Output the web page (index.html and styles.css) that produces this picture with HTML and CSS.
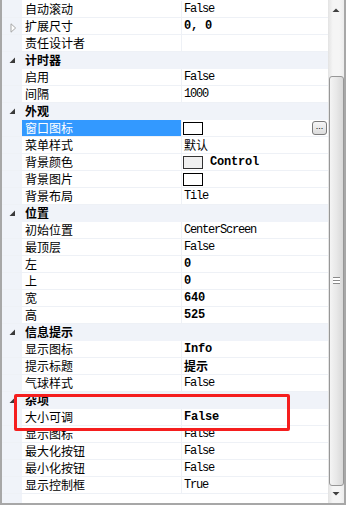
FILE: index.html
```html
<!DOCTYPE html>
<html>
<head>
    <title>属性</title>
    <link rel="stylesheet" href="styles.css">
</head>
<body>
<div class="frame">
    <div class="grid">
        <div class="row"><span class="gutter"></span><span class="name">自动滚动</span><span class="val">False</span></div>
        <div class="row"><span class="gutter"><svg class="plus" width="7" height="10" viewBox="0 0 7 10"><polygon points="1,0.8 5.6,5 1,9.2" fill="#fff" stroke="#a6a6a6"/></svg></span><span class="name">扩展尺寸</span><span class="val bold">0, 0</span></div>
        <div class="row"><span class="gutter"></span><span class="name">责任设计者</span><span class="val"></span></div>

        <div class="row cat"><span class="gutter"><svg class="minus" width="7" height="7" viewBox="0 0 7 7"><polygon points="6,0.5 6,6 0.5,6" fill="#3a3a3a"/></svg></span><span class="name">计时器</span></div>
        <div class="row"><span class="gutter"></span><span class="name">启用</span><span class="val">False</span></div>
        <div class="row"><span class="gutter"></span><span class="name">间隔</span><span class="val">1000</span></div>

        <div class="row cat"><span class="gutter"><svg class="minus" width="7" height="7" viewBox="0 0 7 7"><polygon points="6,0.5 6,6 0.5,6" fill="#3a3a3a"/></svg></span><span class="name">外观</span></div>
        <div class="row"><span class="gutter"></span><span class="name sel">窗口图标</span><span class="val"><span class="swatch"></span><span class="dots">...</span></span></div>
        <div class="row"><span class="gutter"></span><span class="name">菜单样式</span><span class="val cjk">默认</span></div>
        <div class="row"><span class="gutter"></span><span class="name">背景颜色</span><span class="val bold"><span class="swatch grey"></span>Control</span></div>
        <div class="row"><span class="gutter"></span><span class="name">背景图片</span><span class="val"><span class="swatch"></span></span></div>
        <div class="row"><span class="gutter"></span><span class="name">背景布局</span><span class="val">Tile</span></div>

        <div class="row cat"><span class="gutter"><svg class="minus" width="7" height="7" viewBox="0 0 7 7"><polygon points="6,0.5 6,6 0.5,6" fill="#3a3a3a"/></svg></span><span class="name">位置</span></div>
        <div class="row"><span class="gutter"></span><span class="name">初始位置</span><span class="val">CenterScreen</span></div>
        <div class="row"><span class="gutter"></span><span class="name">最顶层</span><span class="val">False</span></div>
        <div class="row"><span class="gutter"></span><span class="name">左</span><span class="val bold">0</span></div>
        <div class="row"><span class="gutter"></span><span class="name">上</span><span class="val bold">0</span></div>
        <div class="row"><span class="gutter"></span><span class="name">宽</span><span class="val bold">640</span></div>
        <div class="row"><span class="gutter"></span><span class="name">高</span><span class="val bold">525</span></div>

        <div class="row cat"><span class="gutter"><svg class="minus" width="7" height="7" viewBox="0 0 7 7"><polygon points="6,0.5 6,6 0.5,6" fill="#3a3a3a"/></svg></span><span class="name">信息提示</span></div>
        <div class="row"><span class="gutter"></span><span class="name">显示图标</span><span class="val bold">Info</span></div>
        <div class="row"><span class="gutter"></span><span class="name">提示标题</span><span class="val cjk bold">提示</span></div>
        <div class="row"><span class="gutter"></span><span class="name">气球样式</span><span class="val">False</span></div>

        <div class="row cat"><span class="gutter"><svg class="minus" width="7" height="7" viewBox="0 0 7 7"><polygon points="6,0.5 6,6 0.5,6" fill="#3a3a3a"/></svg></span><span class="name">杂项</span></div>
        <div class="row"><span class="gutter"></span><span class="name">大小可调</span><span class="val bold">False</span></div>
        <div class="row"><span class="gutter"></span><span class="name">显示图标</span><span class="val">False</span></div>
        <div class="row"><span class="gutter"></span><span class="name">最大化按钮</span><span class="val">False</span></div>
        <div class="row"><span class="gutter"></span><span class="name">最小化按钮</span><span class="val">False</span></div>
        <div class="row"><span class="gutter"></span><span class="name">显示控制框</span><span class="val">True</span></div>
    </div>

    <div class="scroll">
        <svg class="arrow" width="16" height="17" viewBox="0 0 16 17"><polygon points="4.5,12 8,8.5 11.5,12" fill="#404040"/></svg>
        <div class="thumb"><span class="grip"></span></div>
        <svg class="arrow" width="16" height="17" viewBox="0 0 16 17"><polygon points="4.5,6 8,9.5 11.5,6" fill="#404040"/></svg>
    </div>

    <div class="mark"></div>
</div>
</body>
</html>
```

FILE: styles.css
```css
body {
    margin: 0;
    background-color: #ffffff;
    font-family: "Noto Sans CJK SC", "Liberation Sans", sans-serif;
    font-size: 12px;
}

.frame {
    position: relative;
    display: flex;
    width: 342px;
    height: 503px;
    border-left: 2px solid #a7a7a7;
    border-right: 2px solid #a7a7a7;
    border-bottom: 2px solid #a7a7a7;
}

.grid {
    width: 326px;
    padding-top: 1px;
    background-color: #ffffff;
    background-image: linear-gradient(to right, #f0f3f9 20px, transparent 20px);
}

.row {
    display: grid;
    grid-template-columns: 20px 159px 147px;
    height: 16px;
    border-bottom: 1px solid #eef1f6;
    line-height: 16px;
    white-space: nowrap;
}

.gutter {
    position: relative;
    background-color: #f0f3f9;
}

.gutter .plus {
    position: absolute;
    left: 8px;
    top: 5px;
}

.gutter .minus {
    position: absolute;
    left: 7px;
    top: 5px;
}

.name {
    padding-left: 3px;
    color: #000000;
}

.name.sel {
    background-color: #3399ff;
    color: #ffffff;
}

.val {
    display: flex;
    align-items: center;
    padding-left: 2px;
    border-left: 1px solid #eef1f6;
    font-family: "Liberation Mono", "Noto Sans CJK SC", monospace;
    font-size: 12px;
    letter-spacing: -1.2px;
    color: #000000;
}

.val.bold {
    font-weight: bold;
    letter-spacing: -0.2px;
}

.val.cjk {
    font-family: "Noto Sans CJK SC", sans-serif;
    letter-spacing: 0;
}

.cat {
    background-color: #f0f3f9;
    border-bottom-color: #f0f3f9;
}

.cat .name {
    grid-column: 2 / 4;
    font-weight: bold;
}

.swatch {
    display: inline-block;
    width: 18px;
    height: 11px;
    margin-left: -1px;
    margin-right: 7px;
    border: 1px solid #000000;
    background-color: #ffffff;
}

.swatch.grey {
    background-color: #f0f0f0;
    border-color: #333333;
}

.dots {
    margin-left: auto;
    margin-right: 1px;
    width: 13px;
    height: 12px;
    border: 1px solid #7a7a7a;
    border-radius: 3px;
    background: linear-gradient(#f6f6f6, #dcdcdc);
    font-family: "Liberation Sans", sans-serif;
    font-size: 9px;
    line-height: 9px;
    letter-spacing: 0;
    text-align: center;
}

.scroll {
    display: flex;
    flex-direction: column;
    width: 16px;
    background: linear-gradient(to right, #e3e3e3, #f5f5f5 30%, #f5f5f5 70%, #ececec);
}

.arrow {
    flex: none;
}

.thumb {
    position: relative;
    margin: 59px 0 0 1px;
    width: 13px;
    height: 408px;
    border: 1px solid #979797;
    border-radius: 3px;
    background: linear-gradient(to right, #f4f4f4, #e8e8e8 50%, #d8d8d8);
}

.thumb + .arrow {
    margin-top: auto;
}

.grip {
    position: absolute;
    left: 3px;
    top: 200px;
    width: 7px;
    height: 5px;
    border-top: 1px solid #8a8a8a;
    border-bottom: 1px solid #8a8a8a;
    background: linear-gradient(#ffffff 2px, #8a8a8a 2px, #8a8a8a 3px, #ffffff 3px);
}

.mark {
    position: absolute;
    left: 12px;
    top: 394px;
    width: 276px;
    height: 37px;
    box-sizing: border-box;
    border: 3px solid #f51e1e;
    border-radius: 2px;
}
```
